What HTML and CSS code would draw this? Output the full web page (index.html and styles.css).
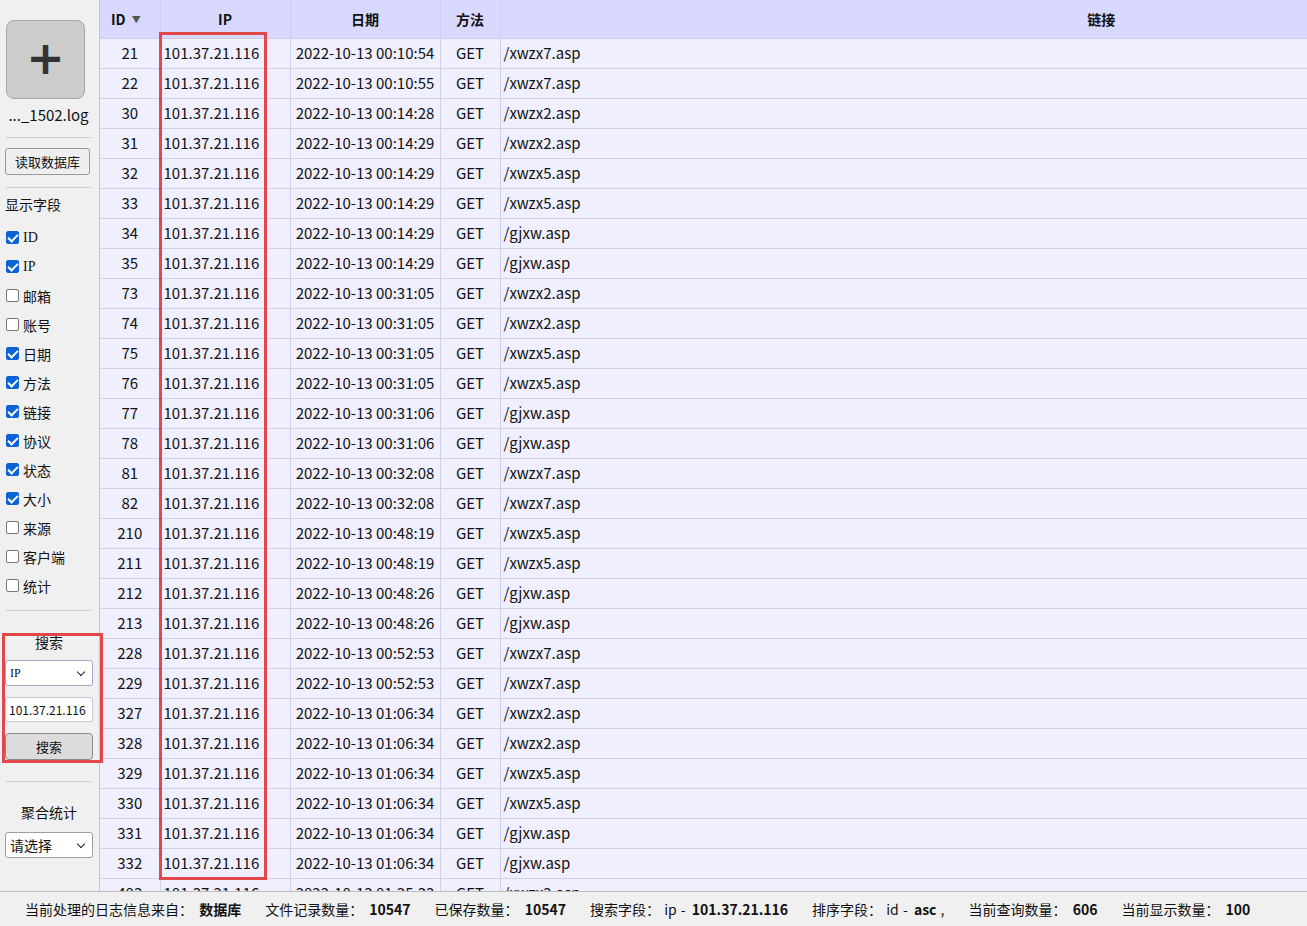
FILE: index.html
```html
<!DOCTYPE html>
<html lang="zh">
<head>
<meta charset="utf-8">
<title>日志分析</title>
<link rel="stylesheet" href="styles.css">
</head>
<body>
<div class="app">
  <div class="main">
    <aside class="sidebar">
      <div class="add-wrap"><button class="add-btn">+</button></div>
      <div class="filename">..._1502.log</div>
      <hr class="sep">
      <button class="btn-read">读取数据库</button>
      <hr class="sep">
      <div class="section-title">显示字段</div>
      <ul class="fields">
        <li><span class="cb on"></span>ID</li>
        <li><span class="cb on"></span>IP</li>
        <li><span class="cb"></span>邮箱</li>
        <li><span class="cb"></span>账号</li>
        <li><span class="cb on"></span>日期</li>
        <li><span class="cb on"></span>方法</li>
        <li><span class="cb on"></span>链接</li>
        <li><span class="cb on"></span>协议</li>
        <li><span class="cb on"></span>状态</li>
        <li><span class="cb on"></span>大小</li>
        <li><span class="cb"></span>来源</li>
        <li><span class="cb"></span>客户端</li>
        <li><span class="cb"></span>统计</li>
      </ul>
      <hr class="sep sep-low">
      <div class="search">
        <div class="center-title">搜索</div>
        <div class="select sel-ip"><span>IP</span><span class="chev"></span></div>
        <div class="input">101.37.21.116</div>
        <button class="btn-search">搜索</button>
      </div>
      <hr class="sep sep-agg">
      <div class="center-title agg-title">聚合统计</div>
      <div class="select sel-agg"><span>请选择</span><span class="chev"></span></div>
    </aside>
    <section class="table-area">
      <table class="grid">
        <thead>
          <tr>
            <th class="c-id">ID <span class="sort">▼</span></th>
            <th class="c-ip">IP</th>
            <th class="c-date">日期</th>
            <th class="c-m">方法</th>
            <th class="c-url">链接</th>
          </tr>
        </thead>
        <tbody>
          <tr><td class="c-id">21</td><td class="c-ip">101.37.21.116</td><td class="c-date">2022-10-13 00:10:54</td><td class="c-m">GET</td><td class="c-url">/xwzx7.asp</td></tr>
          <tr><td class="c-id">22</td><td class="c-ip">101.37.21.116</td><td class="c-date">2022-10-13 00:10:55</td><td class="c-m">GET</td><td class="c-url">/xwzx7.asp</td></tr>
          <tr><td class="c-id">30</td><td class="c-ip">101.37.21.116</td><td class="c-date">2022-10-13 00:14:28</td><td class="c-m">GET</td><td class="c-url">/xwzx2.asp</td></tr>
          <tr><td class="c-id">31</td><td class="c-ip">101.37.21.116</td><td class="c-date">2022-10-13 00:14:29</td><td class="c-m">GET</td><td class="c-url">/xwzx2.asp</td></tr>
          <tr><td class="c-id">32</td><td class="c-ip">101.37.21.116</td><td class="c-date">2022-10-13 00:14:29</td><td class="c-m">GET</td><td class="c-url">/xwzx5.asp</td></tr>
          <tr><td class="c-id">33</td><td class="c-ip">101.37.21.116</td><td class="c-date">2022-10-13 00:14:29</td><td class="c-m">GET</td><td class="c-url">/xwzx5.asp</td></tr>
          <tr><td class="c-id">34</td><td class="c-ip">101.37.21.116</td><td class="c-date">2022-10-13 00:14:29</td><td class="c-m">GET</td><td class="c-url">/gjxw.asp</td></tr>
          <tr><td class="c-id">35</td><td class="c-ip">101.37.21.116</td><td class="c-date">2022-10-13 00:14:29</td><td class="c-m">GET</td><td class="c-url">/gjxw.asp</td></tr>
          <tr><td class="c-id">73</td><td class="c-ip">101.37.21.116</td><td class="c-date">2022-10-13 00:31:05</td><td class="c-m">GET</td><td class="c-url">/xwzx2.asp</td></tr>
          <tr><td class="c-id">74</td><td class="c-ip">101.37.21.116</td><td class="c-date">2022-10-13 00:31:05</td><td class="c-m">GET</td><td class="c-url">/xwzx2.asp</td></tr>
          <tr><td class="c-id">75</td><td class="c-ip">101.37.21.116</td><td class="c-date">2022-10-13 00:31:05</td><td class="c-m">GET</td><td class="c-url">/xwzx5.asp</td></tr>
          <tr><td class="c-id">76</td><td class="c-ip">101.37.21.116</td><td class="c-date">2022-10-13 00:31:05</td><td class="c-m">GET</td><td class="c-url">/xwzx5.asp</td></tr>
          <tr><td class="c-id">77</td><td class="c-ip">101.37.21.116</td><td class="c-date">2022-10-13 00:31:06</td><td class="c-m">GET</td><td class="c-url">/gjxw.asp</td></tr>
          <tr><td class="c-id">78</td><td class="c-ip">101.37.21.116</td><td class="c-date">2022-10-13 00:31:06</td><td class="c-m">GET</td><td class="c-url">/gjxw.asp</td></tr>
          <tr><td class="c-id">81</td><td class="c-ip">101.37.21.116</td><td class="c-date">2022-10-13 00:32:08</td><td class="c-m">GET</td><td class="c-url">/xwzx7.asp</td></tr>
          <tr><td class="c-id">82</td><td class="c-ip">101.37.21.116</td><td class="c-date">2022-10-13 00:32:08</td><td class="c-m">GET</td><td class="c-url">/xwzx7.asp</td></tr>
          <tr><td class="c-id">210</td><td class="c-ip">101.37.21.116</td><td class="c-date">2022-10-13 00:48:19</td><td class="c-m">GET</td><td class="c-url">/xwzx5.asp</td></tr>
          <tr><td class="c-id">211</td><td class="c-ip">101.37.21.116</td><td class="c-date">2022-10-13 00:48:19</td><td class="c-m">GET</td><td class="c-url">/xwzx5.asp</td></tr>
          <tr><td class="c-id">212</td><td class="c-ip">101.37.21.116</td><td class="c-date">2022-10-13 00:48:26</td><td class="c-m">GET</td><td class="c-url">/gjxw.asp</td></tr>
          <tr><td class="c-id">213</td><td class="c-ip">101.37.21.116</td><td class="c-date">2022-10-13 00:48:26</td><td class="c-m">GET</td><td class="c-url">/gjxw.asp</td></tr>
          <tr><td class="c-id">228</td><td class="c-ip">101.37.21.116</td><td class="c-date">2022-10-13 00:52:53</td><td class="c-m">GET</td><td class="c-url">/xwzx7.asp</td></tr>
          <tr><td class="c-id">229</td><td class="c-ip">101.37.21.116</td><td class="c-date">2022-10-13 00:52:53</td><td class="c-m">GET</td><td class="c-url">/xwzx7.asp</td></tr>
          <tr><td class="c-id">327</td><td class="c-ip">101.37.21.116</td><td class="c-date">2022-10-13 01:06:34</td><td class="c-m">GET</td><td class="c-url">/xwzx2.asp</td></tr>
          <tr><td class="c-id">328</td><td class="c-ip">101.37.21.116</td><td class="c-date">2022-10-13 01:06:34</td><td class="c-m">GET</td><td class="c-url">/xwzx2.asp</td></tr>
          <tr><td class="c-id">329</td><td class="c-ip">101.37.21.116</td><td class="c-date">2022-10-13 01:06:34</td><td class="c-m">GET</td><td class="c-url">/xwzx5.asp</td></tr>
          <tr><td class="c-id">330</td><td class="c-ip">101.37.21.116</td><td class="c-date">2022-10-13 01:06:34</td><td class="c-m">GET</td><td class="c-url">/xwzx5.asp</td></tr>
          <tr><td class="c-id">331</td><td class="c-ip">101.37.21.116</td><td class="c-date">2022-10-13 01:06:34</td><td class="c-m">GET</td><td class="c-url">/gjxw.asp</td></tr>
          <tr><td class="c-id">332</td><td class="c-ip">101.37.21.116</td><td class="c-date">2022-10-13 01:06:34</td><td class="c-m">GET</td><td class="c-url">/gjxw.asp</td></tr>
          <tr><td class="c-id">403</td><td class="c-ip">101.37.21.116</td><td class="c-date">2022-10-13 01:35:33</td><td class="c-m">GET</td><td class="c-url">/xwzx2.asp</td></tr>
        </tbody>
      </table>
      <div class="mark mark-ip"></div>
    </section>
    <div class="mark mark-search"></div>
  </div>
  <footer class="status">
    <span class="item">当前处理的日志信息来自： <b>数据库</b></span>
    <span class="item">文件记录数量： <b>10547</b></span>
    <span class="item">已保存数量： <b>10547</b></span>
    <span class="item">搜索字段： ip - <b>101.37.21.116</b></span>
    <span class="item">排序字段： id - <b>asc</b> ,</span>
    <span class="item">当前查询数量： <b>606</b></span>
    <span class="item">当前显示数量： <b>100</b></span>
  </footer>
</div>
</body>
</html>
```
FILE: styles.css
```css
* { box-sizing: border-box; }
html, body { margin: 0; padding: 0; height: 100%; }
body {
  font-family: "Noto Sans CJK SC", "Noto Sans", sans-serif;
  color: #111;
  background: #f0f0f0;
}
.app { display: flex; flex-direction: column; height: 100vh; }
.main { flex: 1; display: flex; position: relative; overflow: hidden; min-height: 0; }

/* sidebar */
.sidebar {
  width: 100px;
  flex: none;
  background: #f0f0f0;
  border-right: 1px solid #c8c8c8;
  padding: 20px 6px 0 5px;
  display: flex;
  flex-direction: column;
}
.add-wrap { padding-left: 1px; }
.add-btn {
  width: 79px; height: 79px;
  border: 1px solid #a8a8a8;
  border-radius: 8px;
  background: #cccccc;
  font-family: "DejaVu Sans", sans-serif;
  font-size: 46px; font-weight: bold;
  color: #333;
  line-height: 1;
  padding: 0 0 4px 0;
  display: flex; align-items: center; justify-content: center;
}
.filename {
  font-size: 15px; line-height: 20px;
  margin-top: 6px; text-align: center; padding-right: 4px; padding-left: 3px;
}
.sep { border: 0; border-top: 1px solid #cfcfcf; margin: 12px 2px 10px 1px; height: 0; }
.btn-read {
  align-self: flex-start;
  width: 85px; height: 27px;
  font-family: "Noto Sans CJK SC", sans-serif;
  font-size: 13px;
  background: #efefef;
  border: 1px solid #9a9a9a;
  border-radius: 3px;
  padding: 0; color: #111;
}
.section-title { font-size: 14px; line-height: 20px; margin-top: -4px; padding-left: 0; }
.fields { list-style: none; margin: 9px 0 0 0; padding: 0 0 0 1px; }
.fields li {
  height: 29px; display: flex; align-items: center;
  font-family: "Liberation Serif", "Noto Sans CJK SC", serif;
  font-size: 14px;
}
.cb {
  width: 13px; height: 13px; margin-right: 4px;
  border: 1px solid #767676; border-radius: 2px; background: #fff;
  position: relative;
}
.cb.on { background: #0b63d6; border-color: #0b63d6; }
.cb.on::after {
  content: ""; position: absolute; left: 3px; top: 0px;
  width: 4px; height: 8px;
  border: solid #fff; border-width: 0 2px 2px 0;
  transform: rotate(45deg);
}
.sep-low { margin-top: 10px; margin-bottom: 21px; }
.search { display: flex; flex-direction: column; }
.center-title { font-size: 14px; line-height: 20px; text-align: center; }
.select {
  margin-top: 8px;
  width: 88px; height: 26px;
  background: #fff; border: 1px solid #a6a6c6; border-radius: 3px;
  display: flex; align-items: center; justify-content: space-between;
  padding: 0 8px 0 4px;
}
.sel-ip span:first-child { font-family: "Liberation Serif", serif; font-size: 12px; }
.sel-agg span:first-child { font-size: 14px; }
.chev {
  width: 6px; height: 6px;
  border: solid #222; border-width: 0 1.6px 1.6px 0;
  transform: rotate(45deg); margin-top: -3px;
}
.input {
  margin-top: 11px; width: 88px; height: 25px;
  background: #fff; border: 1px solid #c8c8d8; border-radius: 2px;
  font-family: "Noto Sans CJK SC", sans-serif; font-size: 12px;
  display: flex; align-items: center; padding-left: 3px;
}
.btn-search {
  margin-top: 11px; width: 88px; height: 27px;
  background: #dcdcdc; border: 1px solid #8a8a8a; border-radius: 4px;
  font-family: "Noto Sans CJK SC", sans-serif; font-size: 13px; padding: 0; color: #111;
}
.sep-agg { margin-top: 21px; margin-bottom: 20px; }
.agg-title { margin-top: 0; }
.sel-agg { margin-top: 10px; border-color: #a0a0a0; }

/* table */
.table-area { flex: 1; position: relative; overflow: hidden; background: #efefff; }
.grid { width: 1602px; border-collapse: collapse; table-layout: fixed; }
.grid th, .grid td { border: 1px solid #cfcfea; padding: 0; white-space: nowrap; overflow: hidden; }
.grid tr > :first-child { border-left: 0; }
.grid tr > :last-child { border-right: 0; }
.grid thead tr > * { border-top: 0; }
.grid th {
  height: 38px; background: #d9d9ff;
  font-size: 14px; font-weight: bold; text-align: center;
}
.grid td { height: 30px; font-size: 15px; line-height: 20px; }
.c-id { width: 60px; text-align: center; }
.c-ip { width: 130px; text-align: left; padding-left: 3px !important; }
th.c-ip { text-align: center; padding-left: 0 !important; padding-right: 0 !important; }
.c-date { width: 150px; text-align: center; }
.c-m { width: 60px; text-align: center; }
.c-url { width: 1202px; text-align: left; padding-left: 3px !important; }
th.c-url { text-align: center; padding-left: 0 !important; }
th.c-id { text-align: left; padding-left: 11px !important; }
.sort { font-size: 9px; color: #555; vertical-align: 2px; margin-left: 3px; }

.mark { position: absolute; border: 3px solid #e2474a; pointer-events: none; }
.mark-ip { left: 59px; top: 32px; width: 108px; height: 848px; }
.mark-search { left: 2px; top: 633px; width: 101px; height: 130px; }

/* status */
.status {
  flex: none; height: 35px;
  background: #f0f0f0; border-top: 1px solid #bdbdbd;
  display: flex; align-items: center;
  padding-left: 25px; font-size: 14px;
}
.status .item { margin-right: 24px; white-space: nowrap; word-spacing: 1px; }
.status b { font-weight: bold; margin-left: 2px; }
```
